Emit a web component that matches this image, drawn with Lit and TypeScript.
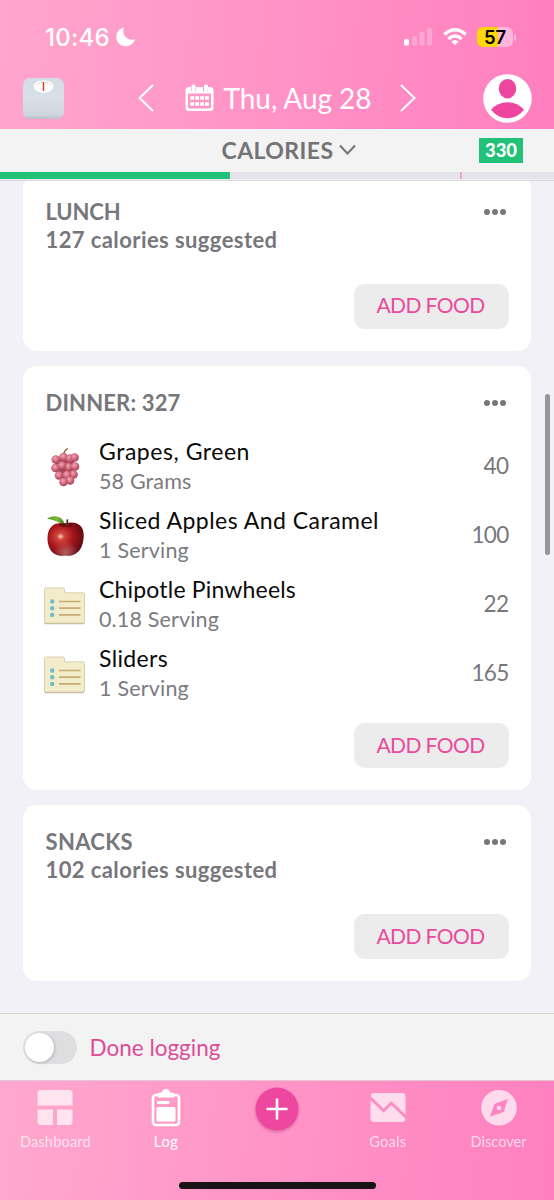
import { LitElement, html, css, svg } from "lit";
import { customElement, property } from "lit/decorators.js";

/** A line of text whose tracking is adjusted so that it spans a given width. */
@customElement("fit-text")
class FitText extends LitElement {
  static styles = css`
    :host { display: block; white-space: nowrap; }
    .run { display: inline-block; }
  `;
  @property({ type: Number }) width = 0;
  @property() text = "";
  render() {
    return html`<span class="run">${this.text}</span>`;
  }
  updated() {
    const run = this.renderRoot.querySelector(".run") as HTMLElement;
    run.style.letterSpacing = "0px";
    const natural = run.getBoundingClientRect().width;
    const gap = (this.width - natural) / this.text.length;
    run.style.letterSpacing = gap.toFixed(3) + "px";
  }
}

const t = (text: string, width: number) => html`<fit-text .text=${text} .width=${width}></fit-text>`;

const grapeSpots: [number, number][] = [
  [20.5, 11], [27, 12.5], [31.5, 11.5], [12.8, 13.5], [25.5, 21], [32, 20.5], [30.5, 28.5],
  [12.5, 22], [19, 19.5], [16, 29.5], [24, 29], [27, 34.5], [20.5, 36],
];

const grapes = html`<svg width="44" height="44" viewBox="0 0 44 44">
  <defs>
    <radialGradient id="gr" cx=".42" cy=".36" r=".65">
      <stop offset="0" stop-color="#f2a9b3" /><stop offset=".5" stop-color="#d66e82" /><stop offset="1" stop-color="#a03e56" />
    </radialGradient>
  </defs>
  <path d="M20.500 8Q21.500 4 25 2.500" fill="none" stroke="#8b5a35" stroke-width="1.300" />
  <path d="M13 12H31L31 26L24 36L17 33L11 22Z" fill="#a5445a" />
  ${grapeSpots.map(([x, y]) => svg`<circle cx=${x} cy=${y} r="4.3" fill="url(#gr)" />`)}
</svg>`;

const apple = html`<svg width="44" height="44" viewBox="0 0 44 44">
  <defs>
    <radialGradient id="ap" cx=".36" cy=".42" r=".68">
      <stop offset="0" stop-color="#fbd3b8" /><stop offset=".15" stop-color="#d0453c" /><stop offset=".5" stop-color="#a81419" /><stop offset="1" stop-color="#5a0818" />
    </radialGradient>
    <radialGradient id="ag" cx=".5" cy=".9" r=".35">
      <stop offset="0" stop-color="#c77a72" stop-opacity=".75" /><stop offset="1" stop-color="#c77a72" stop-opacity="0" />
    </radialGradient>
    <linearGradient id="lf" x1="0" x2="1"><stop offset="0" stop-color="#5f9a2c" /><stop offset=".6" stop-color="#7cbb37" /><stop offset="1" stop-color="#3f7a22" /></linearGradient>
  </defs>
  <path d="M22.500 8.500C28 6.500 35 7.500 38.500 12C42 17 41 27 38 33C35 38 30 41 25 40.700C23 40.400 21 40.400 19 40.700C13 41.200 8 37.500 6 32C3.500 25 4 16 8.500 11.500C12 8 18 7.500 22.500 8.500Z" fill="url(#ap)" />
  <path d="M22.500 8.500C28 6.500 35 7.500 38.500 12C42 17 41 27 38 33C35 38 30 41 25 40.700C23 40.400 21 40.400 19 40.700C13 41.200 8 37.500 6 32C3.500 25 4 16 8.500 11.500C12 8 18 7.500 22.500 8.500Z" fill="url(#ag)" />
  <ellipse cx="23" cy="10" rx="7" ry="2" fill="#4b0a10" opacity=".6" />
  <path d="M23.600 11.500Q24.200 7 24.500 4.300" fill="none" stroke="#4a3a26" stroke-width="1.700" />
  <path d="M4 4C8 .2 18 -.5 21.500 8.300C15 9 13 4.500 4 4Z" fill="url(#lf)" />
</svg>`;

const folder = html`<svg width="44" height="44" viewBox="0 0 44 44">
  <path d="M1.500 6.500Q1.500 5 3 5H20Q21.500 5 21.500 6.500V9.800H40Q41.500 9.800 41.500 11.500V38.800Q41.500 40.300 40 40.300H3Q1.500 40.300 1.500 38.800Z" fill="#c2b99c" />
  <path d="M1.500 5.500Q1.500 4 3 4H20Q21.500 4 21.500 5.500V8.800H40Q41.500 8.800 41.500 10.500V37.500Q41.500 39 40 39H3Q1.500 39 1.500 37.500Z" fill="#f2ecca" stroke="#d6cda9" stroke-width=".9" />
  <g fill="#6cbfca"><circle cx="9.200" cy="17.500" r="2.200" /><circle cx="9.200" cy="24.200" r="2.200" /><circle cx="9.200" cy="30.900" r="2.200" /></g>
  <path d="M16 17.500H37.500M16 24.200H37.500M16 30.900H37.500" stroke="#c7ab74" stroke-width="1.700" />
</svg>`;

interface Food { name: string; nameW: number; amount: string; amountW: number; cal: string; calW: number; icon: unknown }
interface Meal { title: string; titleW: number; hint?: string; foods: Food[] }

const meals: Meal[] = [
  { title: "LUNCH", titleW: 75, hint: "127 calories suggested", foods: [] },
  {
    title: "DINNER: 327", titleW: 135,
    foods: [
      { name: "Grapes, Green", nameW: 151, amount: "58 Grams", amountW: 92.5, cal: "40", calW: 25, icon: grapes },
      { name: "Sliced Apples And Caramel", nameW: 280, amount: "1 Serving", amountW: 90, cal: "100", calW: 37, icon: apple },
      { name: "Chipotle Pinwheels", nameW: 197, amount: "0.18 Serving", amountW: 120, cal: "22", calW: 25, icon: folder },
      { name: "Sliders", nameW: 69, amount: "1 Serving", amountW: 90, cal: "165", calW: 37, icon: folder },
    ],
  },
  { title: "SNACKS", titleW: 87.5, hint: "102 calories suggested", foods: [] },
];

@customElement("meal-card")
class MealCard extends LitElement {
  static styles = css`
    :host { display: block; background: #fff; border-radius: 14px; padding: 22px 22.500px; box-sizing: border-box; flex: none; }
    .head { display: flex; justify-content: space-between; height: 29px; line-height: 29px; font-weight: 700; font-size: 22px; color: #77777b; }
    .dots { margin: 10.500px 2px 0 0; }
    .hint { height: 29px; line-height: 28px; font-weight: 700; font-size: 22px; color: #77777b; }
    .foods { padding-top: 14px; padding-bottom: .5px; }
    .food { display: flex; align-items: center; height: 69.200px; }
    .icon { display: block; width: 44px; height: 44px; margin: 4px 12.500px 0 -3px; }
    .lines { flex: 1; }
    .name { font-size: 23px; line-height: 30px; color: #0a0a0a; }
    .amount { font-size: 21.500px; line-height: 30px; color: #7b7b7f; }
    .cal { font-size: 22.500px; line-height: 30px; color: #77777b; }
    .foot { display: flex; justify-content: flex-end; padding-top: 28.500px; }
    .foods + .foot { padding-top: 14.500px; }
    .add { border: 0; width: 155px; height: 45.500px; border-radius: 11px; background: #ececec; color: #ea4a9c; font: 21px Lato, sans-serif; padding: 0; display: flex; align-items: center; justify-content: center; }
    .add fit-text { margin: -3px 1px 0 0; }
  `;
  @property({ attribute: false }) meal!: Meal;
  render() {
    const m = this.meal;
    return html`
      <div class="head">
        ${t(m.title, m.titleW)}
        <svg class="dots" width="24" height="8" viewBox="0 0 24 8" fill="#77777b"><circle cx="4" cy="4" r="3" /><circle cx="12" cy="4" r="3" /><circle cx="20" cy="4" r="3" /></svg>
      </div>
      ${m.hint ? html`<div class="hint">${t(m.hint, 232)}</div>` : ""}
      ${m.foods.length
        ? html`<div class="foods">${m.foods.map((f) => html`
            <div class="food">
              <span class="icon">${f.icon}</span>
              <div class="lines"><div class="name">${t(f.name, f.nameW)}</div><div class="amount">${t(f.amount, f.amountW)}</div></div>
              <div class="cal">${t(f.cal, f.calW)}</div>
            </div>`)}</div>`
        : ""}
      <div class="foot"><button class="add">${t("ADD FOOD", 108)}</button></div>
    `;
  }
}

@customElement("app-root")
class AppRoot extends LitElement {
  static styles = css`
    :host { display: flex; flex-direction: column; width: 554px; height: 1200px; overflow: hidden; background: #f2f1f8; font-family: Lato, sans-serif; }
    svg { display: block; flex: none; }
    header { height: 129px; flex: none; background: linear-gradient(95deg, #ffa6cd, #ff7fbf); color: #fff; box-sizing: border-box; padding-top: 21px; }
    .status { display: flex; align-items: center; height: 32px; padding: 0 38px 0 45px; font: 500 24px Inter, sans-serif; }
    .moon { margin-left: 6px; }
    .signal { margin-left: auto; }
    .wifi { margin-left: 11px; }
    .battery { margin-left: 10px; width: 36px; height: 20px; border-radius: 6px; background: linear-gradient(90deg, #ffd60a 57%, #ffb5dc 57%); color: #000; font: 600 18.500px/20px Inter, sans-serif; display: flex; justify-content: center; }
    .nub { width: 2px; height: 7px; margin-left: 1px; border-radius: 0 2px 2px 0; background: #ffb5dc; }
    .title { display: flex; align-items: center; height: 52px; margin-top: 19px; padding: 0 22.500px 0 23px; font-size: 28px; }
    .prev { margin-left: 74px; }
    .cal { margin: 0 9.500px 0 31px; }
    .next { margin-left: 28px; }
    .avatar { margin-left: auto; }
    .summary { height: 43px; flex: none; background: #f3f3f3; display: grid; grid-template-columns: 1fr auto 1fr; align-items: center; color: #737378; font-weight: 700; font-size: 23px; }
    .kind { grid-column: 2; display: flex; align-items: center; gap: 5px; padding: 0 0 2px 23px; }
    .goal { justify-self: end; margin-right: 31px; width: 44px; height: 25px; display: flex; align-items: center; justify-content: center; background: #21c178; color: #fff; font-size: 18.500px; }
    .goal fit-text { margin-top: -1px; font-weight: 900; }
    .track { height: 7px; flex: none; background: #e5e4ea; display: flex; }
    .fill { background: #21c178; border-radius: 0 1px 1px 0; }
    .mark { width: 2px; background: #f3a3cb; }
    .rule { height: 2px; flex: none; background: #dad9df; border-top: 1px solid #ededf0; box-sizing: border-box; }
    .scroll { position: relative; flex: 1; min-height: 0; overflow: hidden; }
    .list { display: flex; flex-direction: column; gap: 15px; margin-top: -6px; padding: 0 23px; }
    .bar { position: absolute; right: 4px; top: 213px; width: 5px; height: 161px; border-radius: 3px; background: #97969e; }
    .done { height: 68px; flex: none; box-sizing: border-box; border-top: 1px solid #d3d2d8; border-bottom: 1px solid #e5c4d3; background: #f3f3f3; display: flex; align-items: center; gap: 12.500px; padding: 0 23px 0 23px; color: #dd4c98; font-size: 22.500px; }
    .switch { width: 54px; height: 33px; border-radius: 17px; background: #dedee0; display: flex; align-items: center; }
    .knob { width: 29px; height: 29px; margin-left: 2px; border-radius: 50%; background: #fff; box-shadow: 1px 1px 3px rgba(0, 0, 0, .2); }
    nav { height: 119px; flex: none; box-sizing: border-box; background: linear-gradient(95deg, #ffa8ce, #ff80bf); display: grid; grid-template-columns: repeat(5, 1fr); grid-template-rows: 101px 7px; color: #fff; font-size: 14.500px; }
    .tab { display: flex; flex-direction: column; align-items: center; padding-top: 6px; opacity: .7; }
    .tab.on { opacity: 1; }
    .tab fit-text { margin-top: 4px; }
    .home { grid-column: 1 / -1; width: 197px; height: 7px; margin-left: 178.500px; border-radius: 4px; background: #171316; }
  `;
  progress = 230;
  render() {
    return html`
      <header>
        <div class="status">
          ${t("10:46", 65)}
          <svg class="moon" width="20" height="20" viewBox="0 0 20 20"><path d="M8 .5C6.300 4.500 7.500 8.500 10.500 10.800C13 12.800 16.500 13.300 19.300 12.300C17.300 17.500 12.800 19.700 8.800 19.200C3.500 18.500 .3 14.500 .3 9.700C.3 5 3.500 1.500 8 .5Z" fill="#fff" /></svg>
          <svg class="signal" width="28" height="18" viewBox="0 0 28 18" fill="#fff"><rect x="0" y="11" width="5" height="6.500" rx="1.500" /><g opacity=".25"><rect x="8" y="8" width="5" height="9.500" rx="1.500" /><rect x="15.500" y="4" width="5" height="13.500" rx="1.500" /><rect x="23" y="0" width="5" height="17.500" rx="1.500" /></g></svg>
          <svg class="wifi" width="24" height="18" viewBox="0 0 24 18" fill="none" stroke="#fff" stroke-width="3.300"><path d="M1.300 6.600Q12 -3 22.700 6.600" /><path d="M5.300 10.900Q12 5.100 18.700 10.900" /><path d="M8.300 13.600Q12 10.400 15.700 13.600L12 17.300Z" fill="#fff" stroke="none" /></svg>
          <div class="battery">${t("57", 22)}</div><div class="nub"></div>
        </div>
        <div class="title">
          <svg width="41" height="41" viewBox="0 0 41 41">
            <defs><linearGradient id="sc" x1="0" y1="0" x2="0" y2="1"><stop offset="0" stop-color="#d3dbe3" /><stop offset=".5" stop-color="#d9e0e8" /><stop offset=".9" stop-color="#cfd5dc" /><stop offset="1" stop-color="#b8c1ca" /></linearGradient></defs>
            <rect width="41" height="41" rx="7" fill="url(#sc)" /><ellipse cx="20.500" cy="8.500" rx="10" ry="6.200" fill="#fff" />
            <path d="M13.500 6.700L14.500 5.600M16 4.600L16.700 5.600M18.500 3.600V5M23 3.600V5M25 4.600L24.500 5.600M27.500 6.700L26.500 5.600" stroke="#999" stroke-width=".7" /><path d="M20.500 4V13" stroke="#df3a31" stroke-width="1.500" />
          </svg>
          <svg class="prev" width="16" height="30" viewBox="0 0 16 30" fill="none" stroke="#fff" stroke-width="2"><path d="M15 2L1.500 15L15 28" /></svg>
          <svg class="cal" width="29" height="28" viewBox="0 0 29 28"><path d="M4 3H6V7H11V3H18V7H23V3H25Q28.500 3 28.500 6.500V23.500Q28.500 27 25 27H4Q.5 27 .5 23.500V6.500Q.5 3 4 3ZM3 9.500V22.500Q3 24.500 5 24.500H24Q26 24.500 26 22.500V9.500Z" fill="#fff" fill-rule="evenodd" /><rect x="6.500" y=".5" width="4" height="6.500" rx="1.500" fill="#fff" /><rect x="19" y=".5" width="4" height="6.500" rx="1.500" fill="#fff" />
            <path d="M5.300 14H24M5.300 20H24" stroke="#fff" stroke-width="3.700" stroke-dasharray="3.900 1" /></svg>
          ${t("Thu, Aug 28", 148)}
          <svg class="next" width="16" height="30" viewBox="0 0 16 30" fill="none" stroke="#fff" stroke-width="2"><path d="M1 2L14.500 15L1 28" /></svg>
          <svg class="avatar" width="49" height="49" viewBox="0 0 49 49"><circle cx="24.500" cy="24.500" r="24.300" fill="#fff" /><ellipse cx="24.500" cy="14.700" rx="8.700" ry="9.700" fill="#ee469f" /><path d="M8 35.800Q14.500 28.200 24.500 28.200T41 35.800Q34.500 44.200 24.500 44.200T8 35.800Z" fill="#ee469f" /></svg>
        </div>
      </header>
      <div class="summary">
        <div class="kind">${t("CALORIES", 112)}<svg width="17" height="11" viewBox="0 0 17 11" fill="none" stroke="#737378" stroke-width="2"><path d="M1 1.500L8.500 9.500L16 1.500" /></svg></div>
        <div class="goal">${t("330", 32)}</div>
      </div>
      <div class="track"><div class="fill" style="width:${this.progress}px"></div><div class="mark" style="margin-left:${460 - this.progress}px"></div></div>
      <div class="rule"></div>
      <div class="scroll">
        <div class="list">${meals.map((m) => html`<meal-card .meal=${m}></meal-card>`)}</div>
        <div class="bar"></div>
      </div>
      <div class="done"><div class="switch"><div class="knob"></div></div>${t("Done logging", 131)}</div>
      <nav>
        <div class="tab"><svg width="36" height="42" viewBox="0 0 36 42" fill="#fff"><path d="M4 3H32Q35.500 3 35.500 6.500V18.500H.5V6.500Q.5 3 4 3ZM.5 22.500H16V38H4Q.5 38 .5 34.500ZM20 22.500H35.500V34.500Q35.500 38 32 38H20Z" /></svg>${t("Dashboard", 71)}</div>
        <div class="tab on"><svg width="30" height="42" viewBox="0 0 30 42" fill="none"><rect x="2" y="8" width="26" height="30" rx="3" stroke="#fff" stroke-width="2.600" /><path d="M6.500 10.500V7.500Q6.500 5.500 9 5.500H11Q11.500 2 15 2T19 5.500H21Q23.500 5.500 23.500 7.500V10.500Z" fill="#fff" /><rect x="6" y="14" width="12.500" height="3" rx="1" fill="#fff" /><rect x="5.500" y="20" width="19" height="14.500" rx="1.500" fill="#fff" /></svg>${t("Log", 25)}</div>
        <div class="tab on"><svg width="52" height="52" viewBox="0 0 52 52"><defs><filter id="sh" x="-.2" y="-.2" width="1.400" height="1.400"><feDropShadow dx="0" dy="1.500" stdDeviation="1.500" flood-color="#8c1958" flood-opacity=".35" /></filter></defs><circle cx="26" cy="22" r="21.500" fill="#ee469f" filter="url(#sh)" /><path d="M26 11.500V32.500M15.500 22H36.500" stroke="#fff" stroke-width="2.600" /></svg></div>
        <div class="tab"><svg width="36" height="42" viewBox="0 0 36 42" fill="#fff"><path d="M4 6H32Q35.500 6 35.500 9.500V27.500L21.200 14L13.700 21.800L1 9.500Q.5 6 4 6ZM.5 13L13.700 25.700L21.200 17.900L35.300 31.500Q35.300 35 32 35H4Q.5 35 .5 31.500Z" /></svg>${t("Goals", 37)}</div>
        <div class="tab"><svg width="36" height="42" viewBox="0 0 36 42" fill="#fff" fill-rule="evenodd"><path d="M18 3A17.800 17.800 0 1 1 18 38.600A17.800 17.800 0 1 1 18 3ZM26.800 12L15 16.200Q13.500 16.700 13 18L9 29.500L21 25.800Q22.500 25.300 23 24ZM18 18.700A2.300 2.300 0 1 1 18 23.300A2.300 2.300 0 1 1 18 18.700Z" /></svg>${t("Discover", 56)}</div>
        <div class="home"></div>
      </nav>
    `;
  }
}
